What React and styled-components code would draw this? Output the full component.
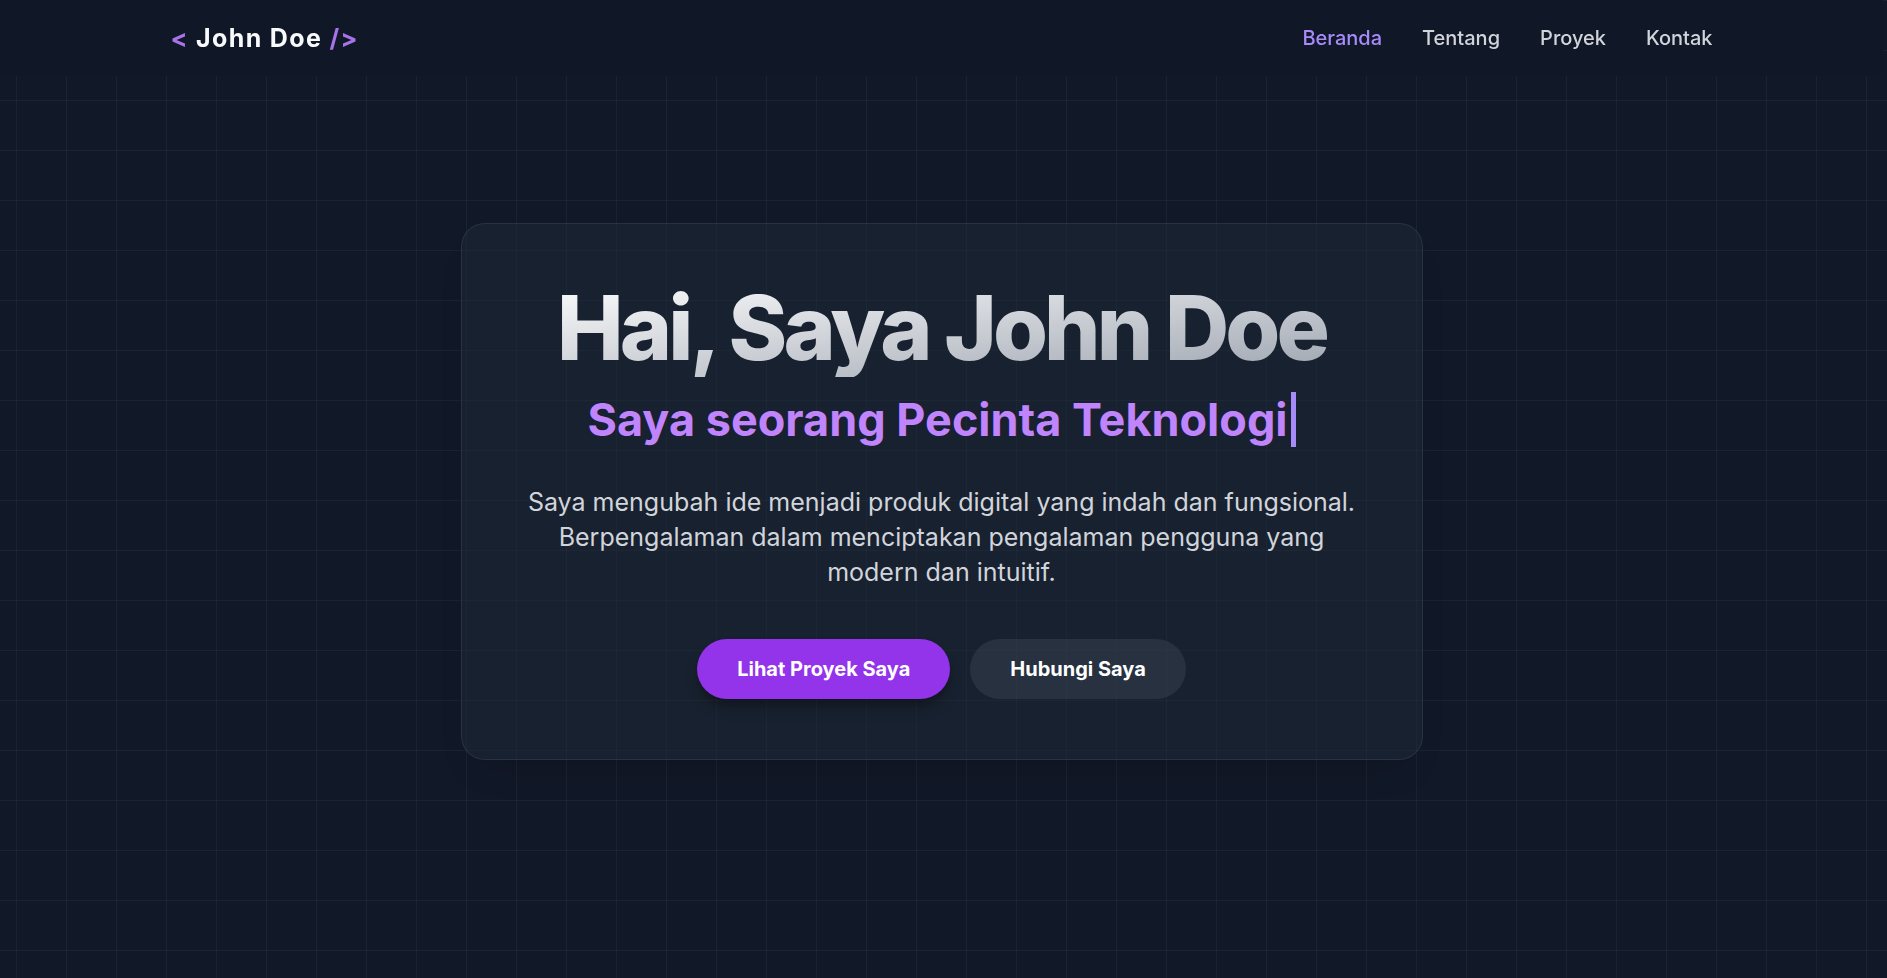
import React from "react";
import styled, { createGlobalStyle } from "styled-components";

const GlobalStyle = createGlobalStyle`
  * { box-sizing: border-box; }
  html, body { margin: 0; padding: 0; }
  body {
    background-color: #111827;
    font-family: Inter, "Noto Sans", "Liberation Sans", sans-serif;
    color: #f9fafb;
  }
`;

const Page = styled.div`
  min-height: 100vh;
  background-color: #111827;
  background-image:
    linear-gradient(to right, rgba(255, 255, 255, 0.045) 1px, transparent 1px),
    linear-gradient(to bottom, rgba(255, 255, 255, 0.045) 1px, transparent 1px);
  background-size: 50px 50px;
  background-position: 16px 0;
`;

const Header = styled.header`
  position: fixed;
  top: 0;
  left: 0;
  right: 4px;
  height: 76px;
  z-index: 10;
  background: rgba(17, 24, 39, 0.85);
  backdrop-filter: blur(3px);
`;

const HeaderInner = styled.div`
  max-width: 1542px;
  height: 100%;
  margin: 0 auto;
  display: flex;
  align-items: center;
  justify-content: space-between;
`;

const Logo = styled.a`
  font-size: 25px;
  font-weight: 700;
  letter-spacing: 1.35px;
  color: #f9fafb;
  text-decoration: none;
  white-space: pre;
`;

const Bracket = styled.span`
  color: #a873e8;
`;

const Nav = styled.nav`
  display: flex;
  align-items: center;
  gap: 40px;
`;

const NavLink = styled.a`
  font-size: 20px;
  font-weight: 500;
  color: ${(p) => (p.$active ? "#a78bfa" : "#d1d5db")};
  text-decoration: none;
`;

const Hero = styled.section`
  min-height: 100vh;
  display: flex;
  align-items: center;
  justify-content: center;
  padding: 5px 4px 0 0;
`;

const Card = styled.div`
  width: 962px;
  padding: 54px 64px 60px;
  border-radius: 24px;
  border: 1px solid rgba(255, 255, 255, 0.08);
  background: rgba(31, 41, 55, 0.5);
  box-shadow: 0 20px 40px -20px rgba(0, 0, 0, 0.2);
  display: flex;
  flex-direction: column;
  align-items: center;
  text-align: center;
`;

const Title = styled.h1`
  margin: 0;
  width: 100%;
  font-size: 89px;
  line-height: 99px;
  font-weight: 800;
  letter-spacing: -0.044em;
  background: linear-gradient(to bottom right, #ffffff, #9ca3af);
  -webkit-background-clip: text;
  background-clip: text;
  color: transparent;
`;

const Subtitle = styled.h2`
  margin: 15px 0 0;
  font-size: 45px;
  line-height: 55px;
  font-weight: 700;
  color: #c084fc;
`;

const Typed = styled.span`
  display: inline-block;
  padding-right: 3px;
  border-right: 5px solid #a78bfa;
`;

const Lead = styled.p`
  margin: 38px 0 0;
  font-size: 25px;
  line-height: 35px;
  font-weight: 400;
  color: #d1d5db;
`;

const Actions = styled.div`
  margin-top: 49px;
  display: flex;
  gap: 20px;
`;

const Button = styled.a`
  display: inline-block;
  padding: 16px 40px;
  border-radius: 9999px;
  font-size: 20px;
  line-height: 28px;
  font-weight: 700;
  color: #ffffff;
  text-decoration: none;
  background: ${(p) => (p.$primary ? "#9333ea" : "rgba(55, 65, 81, 0.5)")};
  box-shadow: ${(p) =>
    p.$primary ? "0 10px 15px -3px rgba(0, 0, 0, 0.3), 0 4px 6px -4px rgba(0, 0, 0, 0.3)" : "none"};
`;

export default function App() {
  return (
    <>
      <GlobalStyle />
      <Page>
        <Header>
          <HeaderInner>
            <Logo href="#">
              <Bracket>&lt;</Bracket> John Doe <Bracket>/&gt;</Bracket>
            </Logo>
            <Nav>
              <NavLink href="#" $active>Beranda</NavLink>
              <NavLink href="#">Tentang</NavLink>
              <NavLink href="#">Proyek</NavLink>
              <NavLink href="#">Kontak</NavLink>
            </Nav>
          </HeaderInner>
        </Header>
        <Hero>
          <Card>
            <Title>Hai, Saya John Doe</Title>
            <Subtitle>
              <Typed>Saya seorang Pecinta Teknologi</Typed>
            </Subtitle>
            <Lead>
              Saya mengubah ide menjadi produk digital yang indah dan fungsional.
              Berpengalaman dalam menciptakan pengalaman pengguna yang modern dan
              intuitif.
            </Lead>
            <Actions>
              <Button href="#" $primary>Lihat Proyek Saya</Button>
              <Button href="#">Hubungi Saya</Button>
            </Actions>
          </Card>
        </Hero>
      </Page>
    </>
  );
}
